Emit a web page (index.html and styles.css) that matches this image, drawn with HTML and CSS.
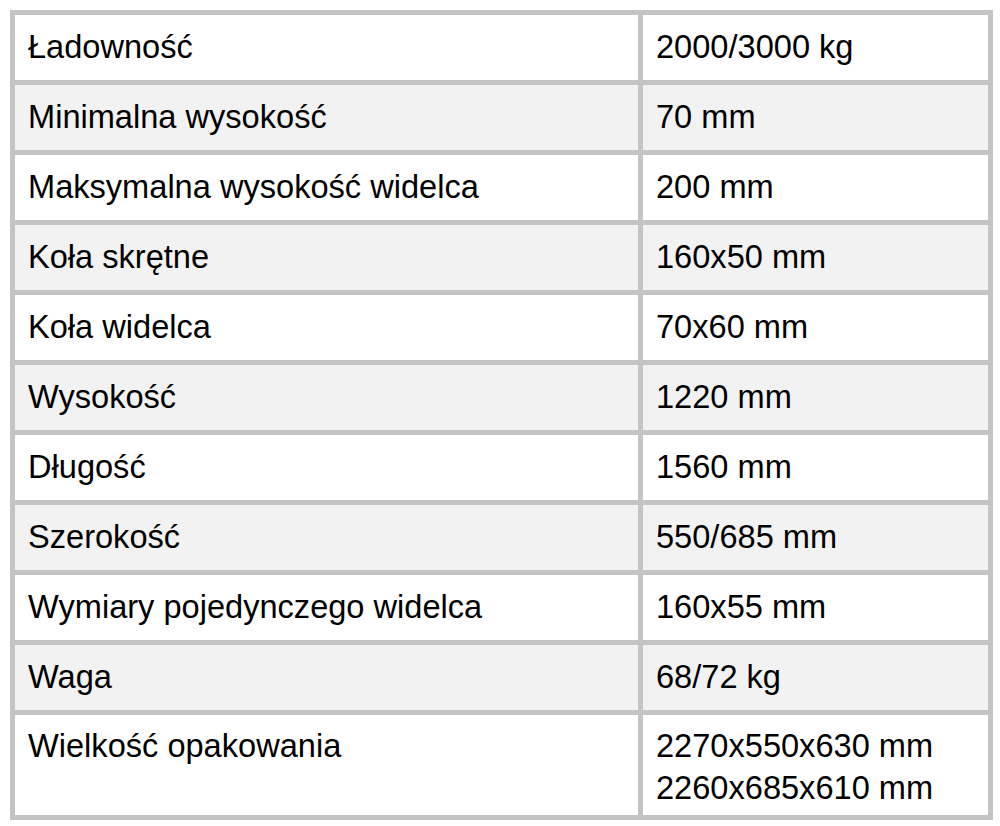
FILE: index.html
```html
<!DOCTYPE html>
<html lang="pl">
<head>
<meta charset="utf-8">
<title>Specyfikacja</title>
<link rel="stylesheet" href="styles.css">
</head>
<body>
<table class="spec">
  <tbody>
    <tr><td class="name">Ładowność</td><td class="val">2000/3000 kg</td></tr>
    <tr><td class="name">Minimalna wysokość</td><td class="val">70 mm</td></tr>
    <tr><td class="name">Maksymalna wysokość widelca</td><td class="val">200 mm</td></tr>
    <tr><td class="name">Koła skrętne</td><td class="val">160x50 mm</td></tr>
    <tr><td class="name">Koła widelca</td><td class="val">70x60 mm</td></tr>
    <tr><td class="name">Wysokość</td><td class="val">1220 mm</td></tr>
    <tr><td class="name">Długość</td><td class="val">1560 mm</td></tr>
    <tr><td class="name">Szerokość</td><td class="val">550/685 mm</td></tr>
    <tr><td class="name">Wymiary pojedynczego widelca</td><td class="val">160x55 mm</td></tr>
    <tr><td class="name">Waga</td><td class="val">68/72 kg</td></tr>
    <tr class="last"><td class="name">Wielkość opakowania</td><td class="val">2270x550x630 mm<br>2260x685x610 mm</td></tr>
  </tbody>
</table>
</body>
</html>
```

FILE: styles.css
```css
html, body {
  margin: 0;
  padding: 0;
  background: #ffffff;
}
body {
  padding: 10px;
  font-family: "Liberation Sans", Arial, sans-serif;
  font-size: 32.6px;
  color: #000;
}
.spec {
  border-collapse: separate;
  border-spacing: 0;
  border-left: 5px solid #c4c4c4;
  border-top: 5px solid #c4c4c4;
  width: 983px;
}
.spec td {
  border-right: 5px solid #c4c4c4;
  border-bottom: 5px solid #c4c4c4;
  padding: 11px 13px 12px 13px;
  line-height: 42px;
  vertical-align: top;
  text-align: left;
}
.spec td.name {
  width: 597px;
}
.spec td.val {
  width: 319px;
}
.spec tr:nth-child(even) td {
  background: #f2f2f2;
}
.spec tr.last td {
  padding-top: 10px;
  padding-bottom: 6px;
}
```
